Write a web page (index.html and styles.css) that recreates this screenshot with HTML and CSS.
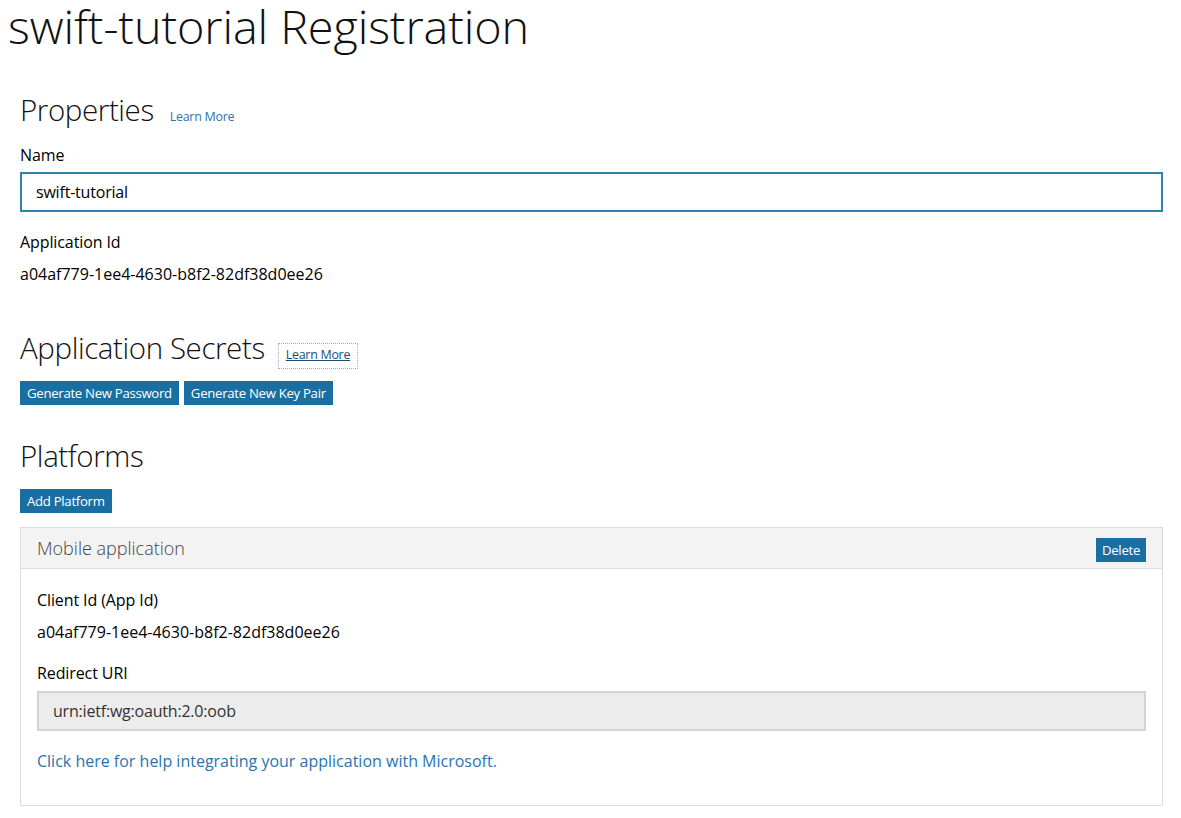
FILE: index.html
```html
<!DOCTYPE html>
<html>
<head>
<meta charset="utf-8">
<link rel="stylesheet" href="styles.css">
</head>
<body>
<h1 class="title">swift-tutorial Registration</h1>
<div class="content">
  <section class="sec sec-props">
    <div class="sec-head">
      <h2 class="sec-title">Properties</h2>
      <a class="learn">Learn More</a>
    </div>
    <div class="label label-first">Name</div>
    <div class="input input-active">swift-tutorial</div>
    <div class="label label-gap">Application Id</div>
    <div class="value">a04af779-1ee4-4630-b8f2-82df38d0ee26</div>
  </section>

  <section class="sec sec-secrets">
    <div class="sec-head sec-head-tight">
      <h2 class="sec-title">Application Secrets</h2>
      <a class="learn learn-focus">Learn More</a>
    </div>
    <div class="btn-row">
      <button class="btn">Generate New Password</button>
      <button class="btn">Generate New Key Pair</button>
    </div>
  </section>

  <section class="sec sec-platforms">
    <h2 class="sec-title">Platforms</h2>
    <div class="btn-row btn-row-plat">
      <button class="btn">Add Platform</button>
    </div>
    <div class="panel">
      <div class="panel-head">
        <span class="panel-title">Mobile application</span>
        <button class="btn btn-del">Delete</button>
      </div>
      <div class="panel-body">
        <div class="label">Client Id (App Id)</div>
        <div class="value">a04af779-1ee4-4630-b8f2-82df38d0ee26</div>
        <div class="label label-gap2">Redirect URI</div>
        <div class="input input-ro">urn:ietf:wg:oauth:2.0:oob</div>
        <a class="help">Click here for help integrating your application with Microsoft.</a>
      </div>
    </div>
  </section>
</div>
</body>
</html>
```
FILE: styles.css
```css
* { box-sizing: border-box; }
body {
  margin: 0;
  padding: 0 8px;
  font-family: "Open Sans", "Noto Sans", sans-serif;
  color: #000;
  background: #fff;
}
.title {
  margin: 0;
  font-weight: 300;
  font-size: 46.8px;
  line-height: 52px;
  letter-spacing: -0.1px;
  color: #111;
}
.content {
  padding: 0 10px 0 12px;
}
.sec-head {
  display: flex;
  align-items: baseline;
  gap: 16px;
}
.sec-head-tight { gap: 14px; }
.sec-title {
  margin: 0;
  font-weight: 300;
  font-size: 29.5px;
  line-height: 40px;
  letter-spacing: -0.4px;
  color: #111;
}
.sec-props { padding-top: 38px; }
.learn {
  font-size: 12.5px;
  color: #2e75ad;
  letter-spacing: -0.3px;
}
.learn-focus {
  color: #1d4f73;
  text-decoration: underline;
  outline: 1px dotted #aaa;
  outline-offset: 0;
  padding: 2px 7px 5px;
}
.label {
  font-size: 16px;
  line-height: 22px;
  letter-spacing: -0.1px;
  margin-top: 5px;
}
.label-first { margin-top: 14px; }
.label-gap { margin-top: 19px; }
.label-gap2 { margin-top: 19px; }
.value {
  font-size: 16px;
  line-height: 22px;
  margin-top: 10px;
}
.input {
  height: 40px;
  border: 2px solid #3280b0;
  margin-top: 6px;
  padding: 0 14px;
  display: flex;
  align-items: center;
  font-size: 16px;
  letter-spacing: -0.2px;
}
.input-ro {
  border-color: #d3d3d3;
  background: #ececec;
  color: #333;
  margin-top: 7px;
}
.sec-secrets { padding-top: 43px; }
.btn-row {
  display: flex;
  gap: 5px;
  margin-top: 13px;
}
.btn {
  border: 0;
  background: #1a6fa2;
  color: #fff;
  font-family: inherit;
  font-size: 13.2px;
  letter-spacing: -0.3px;
  height: 24px;
  padding: 0 7px;
  line-height: 24px;
  cursor: pointer;
}
.sec-platforms { padding-top: 31px; }
.btn-row-plat { margin-top: 13px; }
.panel {
  margin-top: 14px;
  border: 1px solid #dcdcdc;
}
.panel-head {
  background: #f3f3f3;
  border-bottom: 1px solid #dcdcdc;
  height: 41px;
  display: flex;
  align-items: center;
  justify-content: space-between;
  padding: 0 16px;
}
.panel-title {
  font-size: 18px;
  font-weight: 300;
  color: #444;
}
.btn-del {
  margin-top: 4px;
  padding: 0 6px;
}
.panel-body {
  padding: 15px 16px 33px;
}
.help {
  display: block;
  margin-top: 19px;
  font-size: 16px;
  color: #2a74b0;
  line-height: 22px;
}
```
